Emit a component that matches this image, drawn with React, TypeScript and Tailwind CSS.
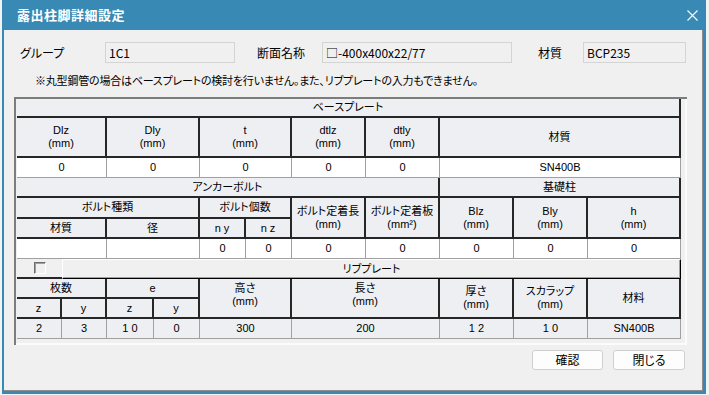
import React from 'react'

const font = "font-['Noto_Sans_CJK_JP','Liberation_Sans',sans-serif]"
const tableFont = "font-['Liberation_Sans','Noto_Sans_CJK_JP',sans-serif]"

function Head({ pos, children, className = '' }: { pos: string; children?: React.ReactNode; className?: string }) {
  return (
    <div
      className={`${pos} flex flex-col items-center justify-center text-center bg-[#eeeff3] border-r-2 border-b-2 border-[#262626] text-[11px] leading-[13px] text-black ${className}`}
    >
      {children}
    </div>
  )
}

function Cell({ pos, children, alt = false }: { pos: string; children?: React.ReactNode; alt?: boolean }) {
  return (
    <div
      className={`${pos} flex items-center justify-center border-r border-b border-[#a0a0a0] text-[11px] text-black ${alt ? 'bg-[#eeeff3]' : 'bg-white'}`}
    >
      {children}
    </div>
  )
}

function Unit({ label, unit = '(mm)' }: { label: string; unit?: string }) {
  return (
    <>
      <span>{label}</span>
      <span>{unit}</span>
    </>
  )
}

function Field({ width, value }: { width: string; value: string }) {
  return (
    <div className={`${width} h-[21px] flex items-center pl-[3px] bg-[#f0f0f0] border border-[#d4d4d4] text-[12px] text-black`}>
      {value}
    </div>
  )
}

export default function App() {
  return (
    <div className={`w-[709px] h-[395px] bg-[#f3f3f3] ${font} [font-feature-settings:'palt']`}>
      <div className="ml-[2px] w-[704px] h-[394px] bg-[#3889b3] flex flex-col">
        <div className="h-[30px] shrink-0 flex items-center justify-between pl-[15px] pr-[8px]">
          <span className="text-white text-[13px] font-bold tracking-[0.5px]">露出柱脚詳細設定</span>
          <svg width="11" height="11" viewBox="0 0 11 11" className="mt-[1px]">
            <path d="M0.5 0.5 L10.5 10.5 M10.5 0.5 L0.5 10.5" stroke="#fff" strokeWidth="1.1" />
          </svg>
        </div>

        <div className="flex-1 ml-[2px] mr-[3px] mb-[3px] bg-[#f0f0f0] border-r border-b border-[#8c8c8c] flex flex-col">
          {/* top fields */}
          <div className="mt-[12px] ml-[16px] flex items-center text-[12px] text-black">
            <span className="w-[85px]">グループ</span>
            <Field width="w-[130px]" value="1C1" />
            <span className="ml-[22px] w-[65px]">断面名称</span>
            <Field width="w-[190px]" value="□-400x400x22/77" />
            <span className="ml-[26px] w-[45px]">材質</span>
            <Field width="w-[103px]" value="BCP235" />
          </div>

          <div className="mt-[9px] ml-[31px] h-[16px] flex items-center text-[11px] tracking-[-0.2px] text-black">
            ※丸型鋼管の場合はベースプレートの検討を行いません。また、リブプレートの入力もできません。
          </div>

          {/* table panel */}
          <div className={`mt-[9px] ml-[10px] w-[673px] h-[248px] border-t-2 border-l-2 border-[#7c7c7c] pl-[1px] bg-[#f0f0f0] shadow-[inset_-2px_-2px_0_#fbfbfb] ${tableFont}`}>
            <div className="grid grid-cols-[45px_45px_47px_46px_46px_46px_74px_74px_74px_74px_93px] grid-rows-[19px_40px_20px_20px_21px_20px_20px_20px_20px_20px_20px]">
              {/* base plate */}
              <Head pos="col-start-1 col-span-11 row-start-1">ベースプレート</Head>
              <Head pos="col-start-1 col-span-2 row-start-2"><Unit label="Dlz" /></Head>
              <Head pos="col-start-3 col-span-2 row-start-2"><Unit label="Dly" /></Head>
              <Head pos="col-start-5 col-span-2 row-start-2"><Unit label="t" /></Head>
              <Head pos="col-start-7 row-start-2"><Unit label="dtlz" /></Head>
              <Head pos="col-start-8 row-start-2"><Unit label="dtly" /></Head>
              <Head pos="col-start-9 col-span-3 row-start-2">材質</Head>
              <Cell pos="col-start-1 col-span-2 row-start-3">0</Cell>
              <Cell pos="col-start-3 col-span-2 row-start-3">0</Cell>
              <Cell pos="col-start-5 col-span-2 row-start-3">0</Cell>
              <Cell pos="col-start-7 row-start-3">0</Cell>
              <Cell pos="col-start-8 row-start-3">0</Cell>
              <Cell pos="col-start-9 col-span-3 row-start-3">SN400B</Cell>

              {/* anchor bolt / foundation column */}
              <Head pos="col-start-1 col-span-8 row-start-4">アンカーボルト</Head>
              <Head pos="col-start-9 col-span-3 row-start-4">基礎柱</Head>
              <Head pos="col-start-1 col-span-4 row-start-5">ボルト種類</Head>
              <Head pos="col-start-5 col-span-2 row-start-5">ボルト個数</Head>
              <Head pos="col-start-7 row-start-5 row-span-2"><Unit label="ボルト定着長" /></Head>
              <Head pos="col-start-8 row-start-5 row-span-2"><Unit label="ボルト定着板" unit="(mm²)" /></Head>
              <Head pos="col-start-9 row-start-5 row-span-2"><Unit label="Blz" /></Head>
              <Head pos="col-start-10 row-start-5 row-span-2"><Unit label="Bly" /></Head>
              <Head pos="col-start-11 row-start-5 row-span-2"><Unit label="h" /></Head>
              <Head pos="col-start-1 col-span-2 row-start-6">材質</Head>
              <Head pos="col-start-3 col-span-2 row-start-6">径</Head>
              <Head pos="col-start-5 row-start-6">n y</Head>
              <Head pos="col-start-6 row-start-6">n z</Head>
              <Cell pos="col-start-1 col-span-2 row-start-7" />
              <Cell pos="col-start-3 col-span-2 row-start-7" />
              <Cell pos="col-start-5 row-start-7">0</Cell>
              <Cell pos="col-start-6 row-start-7">0</Cell>
              <Cell pos="col-start-7 row-start-7">0</Cell>
              <Cell pos="col-start-8 row-start-7">0</Cell>
              <Cell pos="col-start-9 row-start-7">0</Cell>
              <Cell pos="col-start-10 row-start-7">0</Cell>
              <Cell pos="col-start-11 row-start-7">0</Cell>

              {/* rib plate toggle */}
              <div className="col-start-1 row-start-8 flex items-center justify-center bg-[#f0f0f0] border-b-2 border-[#262626]">
                <div className="w-[12px] h-[12px] border-t border-l border-[#6d6d6d] border-r border-b border-r-white border-b-white bg-[#f0f0f0] shadow-[inset_1px_1px_0_#a0a0a0]" />
              </div>
              <div className="col-start-2 col-span-10 row-start-8 flex items-center justify-center bg-[#f0f0f0] border border-t-white border-l-white border-r-black border-b-black shadow-[inset_-1px_-1px_0_#a0a0a0] text-[11px] text-black">
                リブプレート
              </div>

              {/* rib plate */}
              <Head pos="col-start-1 col-span-2 row-start-9">枚数</Head>
              <Head pos="col-start-3 col-span-2 row-start-9">e</Head>
              <Head pos="col-start-5 col-span-2 row-start-9 row-span-2 justify-start pt-[3px]"><Unit label="高さ" /></Head>
              <Head pos="col-start-7 col-span-2 row-start-9 row-span-2 justify-start pt-[3px]"><Unit label="長さ" /></Head>
              <Head pos="col-start-9 row-start-9 row-span-2"><Unit label="厚さ" /></Head>
              <Head pos="col-start-10 row-start-9 row-span-2"><Unit label="スカラップ" /></Head>
              <Head pos="col-start-11 row-start-9 row-span-2">材料</Head>
              <Head pos="col-start-1 row-start-10">z</Head>
              <Head pos="col-start-2 row-start-10">y</Head>
              <Head pos="col-start-3 row-start-10">z</Head>
              <Head pos="col-start-4 row-start-10">y</Head>
              <Cell alt pos="col-start-1 row-start-11">2</Cell>
              <Cell alt pos="col-start-2 row-start-11">3</Cell>
              <Cell alt pos="col-start-3 row-start-11">1 0</Cell>
              <Cell alt pos="col-start-4 row-start-11">0</Cell>
              <Cell alt pos="col-start-5 col-span-2 row-start-11">300</Cell>
              <Cell alt pos="col-start-7 col-span-2 row-start-11">200</Cell>
              <Cell alt pos="col-start-9 row-start-11">1 2</Cell>
              <Cell alt pos="col-start-10 row-start-11">1 0</Cell>
              <Cell alt pos="col-start-11 row-start-11">SN400B</Cell>
            </div>
          </div>

          {/* buttons */}
          <div className="mt-[5px] mr-[17px] flex justify-end gap-[10px]">
            <button className="w-[71px] h-[20px] rounded-[3px] border border-[#cfcfcf] bg-[#fdfdfd] text-[12px] text-black flex items-center justify-center">
              確認
            </button>
            <button className="w-[72px] h-[20px] rounded-[3px] border border-[#cfcfcf] bg-[#fdfdfd] text-[12px] text-black flex items-center justify-center">
              閉じる
            </button>
          </div>
        </div>
      </div>
    </div>
  )
}
